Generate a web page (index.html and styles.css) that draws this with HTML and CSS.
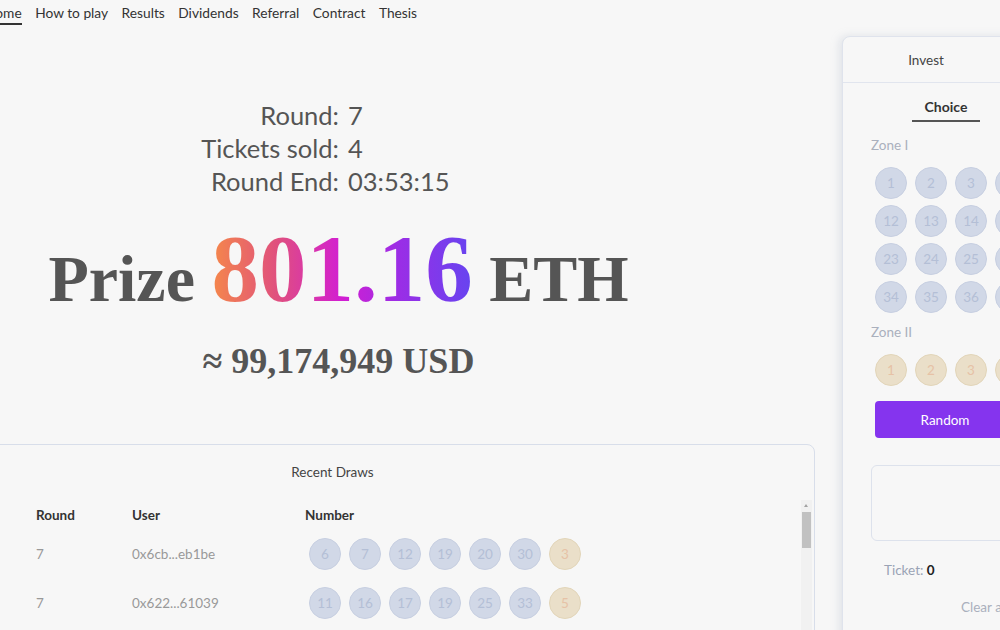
FILE: index.html
```html
<!DOCTYPE html>
<html lang="en">
<head>
<meta charset="utf-8">
<title>Lottery</title>
<link rel="stylesheet" href="styles.css">
</head>
<body>
<nav class="nav">
  <a class="nav-item active">Home</a>
  <a class="nav-item">How to play</a>
  <a class="nav-item">Results</a>
  <a class="nav-item">Dividends</a>
  <a class="nav-item">Referral</a>
  <a class="nav-item">Contract</a>
  <a class="nav-item">Thesis</a>
</nav>
<div class="layout">
  <main class="main">
    <div class="stats">
      <span class="stat-label">Round:</span><span class="stat-value">7</span>
      <span class="stat-label">Tickets sold:</span><span class="stat-value">4</span>
      <span class="stat-label">Round End:</span><span class="stat-value">03:53:15</span>
    </div>
    <div class="prize">Prize <span class="prize-amount">801.16</span> ETH</div>
    <div class="usd">≈ 99,174,949 USD</div>
    <section class="card">
      <h3 class="card-title">Recent Draws</h3>
      <div class="draws">
        <table class="draws-table">
          <thead>
            <tr><th class="col-round">Round</th><th class="col-user">User</th><th>Number</th></tr>
          </thead>
          <tbody>
            <tr><td>7</td><td>0x6cb...eb1be</td><td><span class="ball">6</span><span class="ball">7</span><span class="ball">12</span><span class="ball">19</span><span class="ball">20</span><span class="ball">30</span><span class="ball ball-b">3</span></td></tr>
            <tr><td>7</td><td>0x622...61039</td><td><span class="ball">11</span><span class="ball">16</span><span class="ball">17</span><span class="ball">19</span><span class="ball">25</span><span class="ball">33</span><span class="ball ball-b">5</span></td></tr>
            <tr><td>7</td><td>0x3fa...9c2d0</td><td><span class="ball">2</span><span class="ball">8</span><span class="ball">14</span><span class="ball">21</span><span class="ball">27</span><span class="ball">35</span><span class="ball ball-b">9</span></td></tr>
            <tr><td>7</td><td>0x81e...04a7f</td><td><span class="ball">4</span><span class="ball">10</span><span class="ball">15</span><span class="ball">23</span><span class="ball">29</span><span class="ball">31</span><span class="ball ball-b">1</span></td></tr>
          </tbody>
        </table>
        <div class="scrollbar" aria-hidden="true">
          <span class="scroll-arrow"></span>
          <span class="scroll-thumb"></span>
        </div>
      </div>
    </section>
  </main>
  <aside class="side">
    <div class="side-head"><span class="side-tab">Invest</span></div>
    <div class="side-body">
      <div class="choice-tabs"><span class="choice-tab">Choice</span></div>
      <div class="zone-label">Zone I</div>
      <div class="zone-balls">
        <span class="ball">1</span><span class="ball">2</span><span class="ball">3</span><span class="ball">4</span><span class="ball">5</span><span class="ball">6</span><span class="ball">7</span><span class="ball">8</span><span class="ball">9</span><span class="ball">10</span><span class="ball">11</span>
        <span class="ball">12</span><span class="ball">13</span><span class="ball">14</span><span class="ball">15</span><span class="ball">16</span><span class="ball">17</span><span class="ball">18</span><span class="ball">19</span><span class="ball">20</span><span class="ball">21</span><span class="ball">22</span>
        <span class="ball">23</span><span class="ball">24</span><span class="ball">25</span><span class="ball">26</span><span class="ball">27</span><span class="ball">28</span><span class="ball">29</span><span class="ball">30</span><span class="ball">31</span><span class="ball">32</span><span class="ball">33</span>
        <span class="ball">34</span><span class="ball">35</span><span class="ball">36</span><span class="ball">37</span><span class="ball">38</span><span class="ball">39</span><span class="ball">40</span><span class="ball">41</span><span class="ball">42</span><span class="ball">43</span><span class="ball">44</span>
      </div>
      <div class="zone-label">Zone II</div>
      <div class="zone-balls">
        <span class="ball ball-b">1</span><span class="ball ball-b">2</span><span class="ball ball-b">3</span><span class="ball ball-b">4</span><span class="ball ball-b">5</span><span class="ball ball-b">6</span><span class="ball ball-b">7</span><span class="ball ball-b">8</span><span class="ball ball-b">9</span><span class="ball ball-b">10</span><span class="ball ball-b">11</span>
      </div>
      <button class="random-btn">Random</button>
      <div class="picked"></div>
      <div class="ticket">Ticket: <b>0</b></div>
      <div class="clear">Clear all</div>
    </div>
  </aside>
</div>
</body>
</html>
```
FILE: styles.css
```css
html, body {
  margin: 0;
  padding: 0;
  overflow: hidden;
  background: #f7f7f7;
}
body {
  font-family: Lato, "Open Sans", sans-serif;
  color: #333;
  width: 1000px;
  height: 630px;
}

.nav {
  display: flex;
  gap: 13.5px;
  margin-left: -15px;
  height: 26px;
  align-items: flex-start;
}
.nav-item {
  font-size: 13.75px;
  line-height: 16px;
  padding-top: 5px;
  padding-bottom: 2px;
  color: #333;
  white-space: nowrap;
}
.nav-item.active {
  border-bottom: 2px solid #333;
}

.layout {
  display: flex;
  margin-top: 10px;
  align-items: flex-start;
}
.main {
  flex: 0 0 965px;
  margin-left: -150px;
}

.stats {
  display: grid;
  grid-template-columns: 489px auto;
  column-gap: 9px;
  padding-top: 63px;
  font-size: 25.5px;
  line-height: 33px;
  color: #555;
}
.stat-label { text-align: right; }

.prize {
  margin-top: 24px;
  text-align: center;
  font-family: "Liberation Serif", "Times New Roman", serif;
  font-weight: bold;
  font-size: 66px;
  line-height: 1;
  color: #555;
  padding-left: 12px;
}
.prize-amount {
  font-size: 95px;
  line-height: 1;
  background: linear-gradient(90deg, #f5884a 0%, #e0507e 25%, #d21ed2 50%, #9a2ee6 72%, #6644f0 100%);
  -webkit-background-clip: text;
  background-clip: text;
  color: transparent;
}

.usd {
  margin-top: 26px;
  text-align: center;
  font-family: "Liberation Serif", "Times New Roman", serif;
  font-weight: bold;
  font-size: 36px;
  line-height: 36px;
  color: #555;
  padding-left: 12px;
}

.card {
  margin-top: 65px;
  border: 1px solid #d8deea;
  border-radius: 8px;
  background: #f7f7f7;
  height: 260px;
}
.card-title {
  margin: 19px 0 20px;
  text-align: center;
  font-size: 13.5px;
  line-height: 16px;
  font-weight: normal;
  color: #444;
}
.draws {
  position: relative;
  height: 160px;
  overflow: hidden;
  padding-left: 185px;
  margin-right: 2px;
}
.scrollbar {
  position: absolute;
  top: 0;
  right: 0;
  width: 11px;
  height: 100%;
  background: #f1f1f1;
}
.scroll-arrow {
  position: absolute;
  top: 4px;
  left: 3px;
  border-left: 2.5px solid transparent;
  border-right: 2.5px solid transparent;
  border-bottom: 3px solid #a3a3a3;
}
.scroll-thumb {
  position: absolute;
  top: 12px;
  left: 1px;
  width: 9px;
  height: 36px;
  background: #c1c1c1;
}
.draws-table {
  border-collapse: collapse;
  font-size: 13.5px;
}
.draws-table th {
  text-align: left;
  font-weight: bold;
  color: #333;
  height: 29px;
  padding: 0;
  vertical-align: middle;
}
.draws-table td {
  height: 49px;
  padding: 0;
  color: #999;
  vertical-align: middle;
  white-space: nowrap;
}
.col-round { width: 96px; }
.col-user { width: 173px; }

.ball {
  display: inline-flex;
  align-items: center;
  justify-content: center;
  box-sizing: border-box;
  width: 32px;
  height: 32px;
  margin: 0 4px;
  border-radius: 50%;
  background: #d1d8e7;
  border: 1px solid #c7cfe1;
  color: #b4bfd6;
  font-size: 13.5px;
  vertical-align: middle;
}
.ball-b {
  background: #eadfc9;
  border-color: #e2d5b9;
  color: #e6c2a6;
}

.side {
  flex: 0 0 460px;
  margin-left: 27px;
  border: 1px solid #dfe3ec;
  border-radius: 8px;
  background: #f7f7f7;
  box-shadow: -3px 0 8px rgba(160, 170, 190, 0.25);
  height: 640px;
}
.side-head {
  display: flex;
  height: 45px;
  align-items: center;
  border-bottom: 1px solid #e1e5ee;
}
.side-tab {
  width: 166px;
  text-align: center;
  font-size: 13.5px;
  color: #444;
}
.side-body {
  padding-left: 28px;
}
.choice-tabs {
  display: flex;
  padding-left: 41px;
  margin-top: 15px;
}
.choice-tab {
  width: 68px;
  text-align: center;
  font-size: 14px;
  font-weight: bold;
  line-height: 18px;
  color: #333;
  padding-bottom: 4px;
  border-bottom: 2px solid #555;
}
.zone-label {
  font-size: 13.5px;
  line-height: 16px;
  color: #aab0bd;
  margin-top: 15px;
}
.zone-balls {
  display: flex;
  flex-wrap: wrap;
  width: 440px;
  margin-top: 14px;
}
.zone-balls .ball {
  margin: 0 4px 6px;
}
.zone-balls + .zone-label { margin-top: 5px; }
.random-btn {
  display: block;
  margin: 9px 0 0 4px;
  width: 140px;
  height: 37px;
  border: none;
  border-radius: 4px;
  background: #8534ee;
  color: #fff;
  font-family: Lato, sans-serif;
  font-size: 13.5px;
}
.picked {
  margin-top: 27px;
  height: 74px;
  width: 400px;
  border: 1px solid #dde2ec;
  border-radius: 6px;
}
.ticket {
  margin: 21px 0 0 13px;
  font-size: 13.5px;
  line-height: 16px;
  color: #9aa3b5;
}
.ticket b { color: #222; }
.clear {
  margin: 21px 0 0 90px;
  font-size: 13.5px;
  line-height: 16px;
  color: #aab0bd;
}
```
